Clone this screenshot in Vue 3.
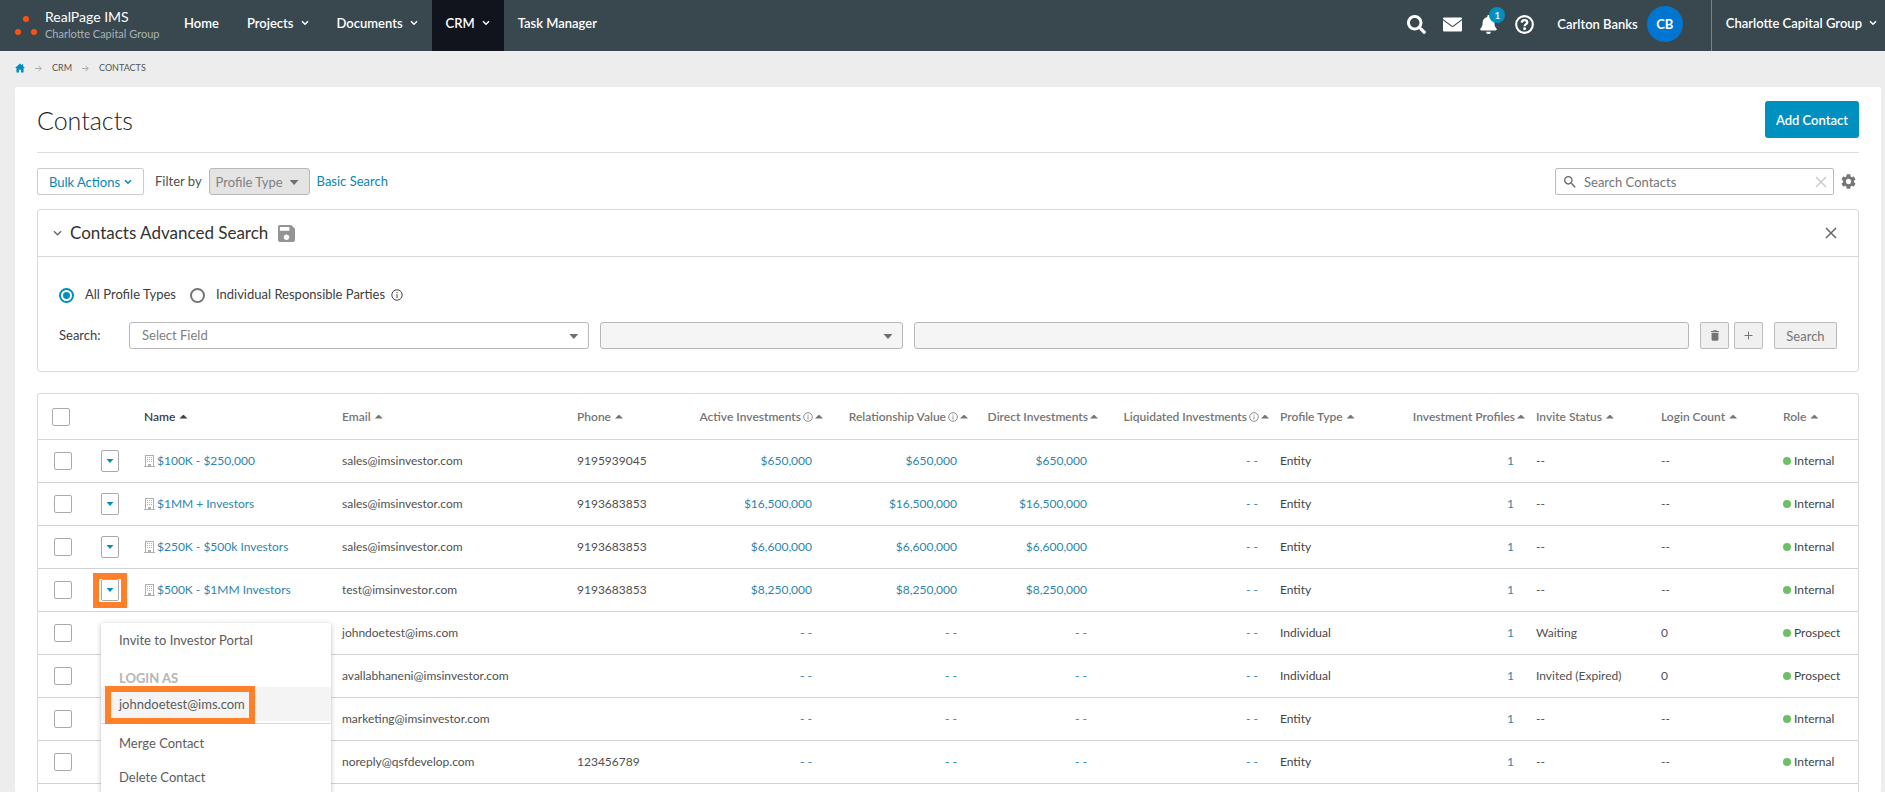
<script setup>
import { ref } from 'vue'

const nav = [
  { label: 'Home' },
  { label: 'Projects', menu: true },
  { label: 'Documents', menu: true },
  { label: 'CRM', menu: true, active: true },
  { label: 'Task Manager' },
]

const columns = [
  { label: 'Name', active: true },
  { label: 'Email' },
  { label: 'Phone' },
  { label: 'Active Investments', num: true, info: true },
  { label: 'Relationship Value', num: true, info: true },
  { label: 'Direct Investments', num: true },
  { label: 'Liquidated Investments', num: true, info: true },
  { label: 'Profile Type' },
  { label: 'Investment Profiles', num: true },
  { label: 'Invite Status' },
  { label: 'Login Count' },
  { label: 'Role' },
]

const none = '- -'
const rows = [
  { name: '$100K - $250,000', email: 'sales@imsinvestor.com', phone: '9195939045', amount: '$650,000', type: 'Entity', status: '--', logins: '--', role: 'Internal' },
  { name: '$1MM + Investors', email: 'sales@imsinvestor.com', phone: '9193683853', amount: '$16,500,000', type: 'Entity', status: '--', logins: '--', role: 'Internal' },
  { name: '$250K - $500k Investors', email: 'sales@imsinvestor.com', phone: '9193683853', amount: '$6,600,000', type: 'Entity', status: '--', logins: '--', role: 'Internal' },
  { name: '$500K - $1MM Investors', email: 'test@imsinvestor.com', phone: '9193683853', amount: '$8,250,000', type: 'Entity', status: '--', logins: '--', role: 'Internal', open: true },
  { email: 'johndoetest@ims.com', phone: '', amount: none, type: 'Individual', status: 'Waiting', logins: '0', role: 'Prospect' },
  { email: 'avallabhaneni@imsinvestor.com', phone: '', amount: none, type: 'Individual', status: 'Invited (Expired)', logins: '0', role: 'Prospect' },
  { email: 'marketing@imsinvestor.com', phone: '', amount: none, type: 'Entity', status: '--', logins: '--', role: 'Internal' },
  { email: 'noreply@qsfdevelop.com', phone: '123456789', amount: none, type: 'Entity', status: '--', logins: '--', role: 'Internal' },
]

const scope = ref('all')
</script>

<template>
  <div class="page">
    <header class="topbar">
      <div class="brand">
        <svg class="logo" viewBox="0 0 24 20" aria-hidden="true">
          <circle cx="11" cy="4" r="3" /><circle cx="3" cy="17" r="3" /><circle cx="19" cy="17" r="3" />
        </svg>
        <div>
          <div class="brand-name">RealPage IMS</div>
          <div class="brand-sub">Charlotte Capital Group</div>
        </div>
      </div>
      <nav class="nav">
        <a v-for="item in nav" :key="item.label" href="#" :class="{ active: item.active }">
          {{ item.label }}
          <svg v-if="item.menu" class="chev" viewBox="0 0 8 6"><path d="M1 1.2l3 3 3-3" /></svg>
        </a>
      </nav>
      <div class="tools">
        <button type="button" aria-label="Search">
          <svg viewBox="0 0 512 512"><path d="M505 442.700L405.300 343c-4.500-4.500-10.600-7-17-7H372c27.600-35.300 44-79.700 44-128C416 93.100 322.900 0 208 0S0 93.100 0 208s93.100 208 208 208c48.300 0 92.700-16.400 128-44v16.300c0 6.400 2.500 12.500 7 17l99.700 99.700c9.400 9.400 24.600 9.400 33.900 0l28.300-28.300c9.400-9.400 9.400-24.600.1-34zM208 336c-70.700 0-128-57.200-128-128 0-70.700 57.200-128 128-128 70.700 0 128 57.200 128 128 0 70.700-57.200 128-128 128z" /></svg>
        </button>
        <button type="button" aria-label="Messages">
          <svg viewBox="0 0 19 19"><path d="M1 2.500h17a1 1 0 0 1 1 1v.6l-9 6.600q-.5.300-1 0L0 4.100v-.6a1 1 0 0 1 1-1zM0 5.300l8.200 6.100q1.300.8 2.600 0L19 5.300v10.200a1 1 0 0 1-1 1H1a1 1 0 0 1-1-1z" /></svg>
        </button>
        <button type="button" class="bell" aria-label="Notifications">
          <svg viewBox="0 0 448 512"><path d="M224 512c35.320 0 63.970-28.650 63.970-64H160.030c0 35.350 28.650 64 63.970 64zm215.390-149.710c-19.320-20.760-55.470-51.990-55.470-154.290 0-77.700-54.480-139.900-127.940-155.160V32c0-17.670-14.320-32-31.980-32s-31.980 14.330-31.980 32v20.840C118.560 68.100 64.080 130.300 64.080 208c0 102.300-36.150 133.530-55.470 154.290-6 6.450-8.660 14.160-8.610 21.710.11 16.400 12.980 32 32.100 32h383.800c19.120 0 32-15.600 32.100-32 .05-7.550-2.610-15.270-8.610-21.710z" /></svg>
          <span class="badge">1</span>
        </button>
        <button type="button" aria-label="Help">
          <svg viewBox="0 0 18 18"><g fill="none" stroke="currentColor" stroke-width="2"><circle cx="9" cy="9" r="7.900" /><path d="M6.400 7.200C6.500 5.600 7.600 4.800 9 4.800c1.500 0 2.600.8 2.600 2.200C11.600 8.700 9.100 8.700 9.100 10.700" stroke-width="2.200" /></g><circle cx="9.100" cy="13" r="1.400" /></svg>
        </button>
      </div>
      <a href="#" class="user">Carlton Banks <span class="avatar">CB</span></a>
      <button type="button" class="company">
        Charlotte Capital Group
        <svg class="chev" viewBox="0 0 8 6"><path d="M1 1.200l3 3 3-3" /></svg>
      </button>
    </header>

    <nav class="crumbs" aria-label="Breadcrumb">
      <a href="#" class="home" aria-label="Home"><svg viewBox="0 0 12 11"><path d="M6 0L0 5.600h1.700V11H4.800V7.500h2.400V11h3.100V5.600H12L9.800 3.500V1H8.300v1.200z" /></svg></a>
      <svg class="arrow" viewBox="0 0 7 7"><path d="M0 3.500h6M3.500.8l2.700 2.700-2.700 2.700" /></svg>
      <a href="#">CRM</a>
      <svg class="arrow" viewBox="0 0 7 7"><path d="M0 3.500h6M3.500.8l2.700 2.700-2.700 2.700" /></svg>
      <span>CONTACTS</span>
    </nav>

    <main class="card">
      <div class="title-row">
        <h1>Contacts</h1>
        <button type="button" class="add">Add Contact</button>
      </div>

      <div class="toolbar">
        <button type="button" class="bulk">Bulk Actions <svg class="chev" viewBox="0 0 8 6"><path d="M1 1.200l3 3 3-3" /></svg></button>
        <label for="profile-filter" class="filter-label">Filter by</label>
        <div class="select filter">
          <select id="profile-filter"><option>Profile Type</option></select>
        </div>
        <a href="#" class="basic">Basic Search</a>
        <div class="search-box">
          <svg class="mag" viewBox="3 3 18 18"><path d="M15.500 14h-.79l-.28-.27C15.410 12.590 16 11.110 16 9.500 16 5.910 13.090 3 9.500 3S3 5.910 3 9.500 5.910 16 9.500 16c1.610 0 3.090-.59 4.230-1.570l.27.28v.79l5 4.990L20.490 19l-4.990-5zm-6 0C7.010 14 5 11.990 5 9.500S7.010 5 9.500 5 14 7.010 14 9.500 11.990 14 9.500 14z" /></svg>
          <input type="text" placeholder="Search Contacts" aria-label="Search Contacts" />
          <button type="button" aria-label="Clear"><svg class="cross" viewBox="0 0 12 12"><path d="M1 1l10 10M11 1L1 11" /></svg></button>
        </div>
        <button type="button" class="gear" aria-label="Settings">
          <svg viewBox="2 2 20 20"><path d="M19.140 12.940c.04-.3.06-.61.06-.94 0-.32-.02-.64-.07-.94l2.030-1.580c.18-.14.23-.41.12-.61l-1.920-3.320c-.12-.22-.37-.29-.59-.22l-2.390.96c-.5-.38-1.030-.7-1.620-.94l-.36-2.540c-.04-.24-.24-.41-.48-.41h-3.840c-.24 0-.43.17-.47.41l-.36 2.540c-.59.24-1.130.57-1.620.94l-2.390-.96c-.22-.08-.47 0-.59.22L2.740 8.870c-.12.21-.08.47.12.61l2.030 1.580c-.05.3-.09.63-.09.94s.02.64.07.94l-2.030 1.580c-.18.14-.23.41-.12.61l1.920 3.320c.12.22.37.29.59.22l2.390-.96c.5.38 1.030.7 1.620.94l.36 2.540c.05.24.24.41.48.41h3.840c.24 0 .44-.17.47-.41l.36-2.540c.59-.24 1.130-.56 1.620-.94l2.390.96c.22.08.47 0 .59-.22l1.920-3.320c.12-.22.07-.47-.12-.61l-2.010-1.580zM12 15.600c-1.980 0-3.600-1.620-3.600-3.600s1.620-3.600 3.600-3.600 3.600 1.620 3.600 3.600-1.620 3.600-3.600 3.600z" /></svg>
        </button>
      </div>

      <section class="panel">
        <div class="panel-head">
          <svg class="fold" viewBox="0 0 10 7"><path d="M1 1l4 4 4-4" /></svg>
          <h2>Contacts Advanced Search</h2>
          <button type="button" aria-label="Save search">
            <svg class="save" viewBox="3 3 18 18"><path d="M17 3H5c-1.110 0-2 .9-2 2v14c0 1.100.89 2 2 2h14c1.100 0 2-.9 2-2V7l-4-4zm-5 16c-1.660 0-3-1.340-3-3s1.340-3 3-3 3 1.340 3 3-1.340 3-3 3zm3-10H5V5h10v4z" /></svg>
          </button>
          <button type="button" class="close" aria-label="Close"><svg class="cross" viewBox="0 0 12 12"><path d="M1 1l10 10M11 1L1 11" /></svg></button>
        </div>
        <div class="panel-body">
          <div class="radios">
            <input id="scope-all" v-model="scope" type="radio" name="scope" value="all" />
            <label for="scope-all">All Profile Types</label>
            <input id="scope-ind" v-model="scope" type="radio" name="scope" value="individual" />
            <label for="scope-ind">Individual Responsible Parties</label>
            <svg class="info dark" viewBox="0 0 12 12"><circle cx="6" cy="6" r="5.200" /><path d="M6 5.200V9M6 3v1.200" /></svg>
          </div>
          <div class="criteria">
            <label for="field">Search:</label>
            <div class="select">
              <select id="field"><option>Select Field</option></select>
            </div>
            <div class="select">
              <select aria-label="Operator" disabled><option></option></select>
            </div>
            <input type="text" class="value" aria-label="Value" disabled />
            <div class="pair">
              <button type="button" class="grey" aria-label="Remove"><svg class="trash" viewBox="5 3 14 18"><path d="M6 19c0 1.100.9 2 2 2h8c1.100 0 2-.9 2-2V7H6v12zM19 4h-3.500l-1-1h-5l-1 1H5v2h14V4z" /></svg></button>
              <button type="button" class="grey" aria-label="Add"><svg class="plus" viewBox="0 0 9 9"><path d="M4.500 0.500v8M0.500 4.500h8" /></svg></button>
            </div>
            <button type="button" class="grey go">Search</button>
          </div>
        </div>
      </section>

      <div class="grid">
        <table>
          <colgroup>
            <col class="w-check" /><col class="w-action" /><col class="w-name" /><col class="w-email" />
            <col class="w-phone" /><col class="w-active" /><col class="w-relation" /><col class="w-direct" />
            <col class="w-liquid" /><col class="w-type" /><col class="w-profiles" /><col class="w-status" />
            <col class="w-logins" /><col class="w-role" />
          </colgroup>
          <thead>
            <tr>
              <th class="check"><input type="checkbox" aria-label="Select all contacts" /></th>
              <th></th>
              <th v-for="c in columns" :key="c.label" :class="{ num: c.num, sorted: c.active }">
                <span class="th">
                  {{ c.label }}
                  <svg v-if="c.info" class="info" viewBox="0 0 12 12"><circle cx="6" cy="6" r="5.200" /><path d="M6 5.200V9M6 3v1.200" /></svg>
                  <i class="sort"></i>
                </span>
              </th>
            </tr>
          </thead>
          <tbody>
            <tr v-for="(r, i) in rows" :key="i">
              <td class="check"><input type="checkbox" :aria-label="'Select ' + r.email" /></td>
              <td class="action">
                <div v-if="r.name" class="anchor">
                  <button type="button" class="drop" aria-label="Contact actions"><i></i></button>
                  <template v-if="r.open">
                    <span class="ring"></span>
                    <div class="menu">
                      <a href="#">Invite to Investor Portal</a>
                      <div class="menu-title">LOGIN AS</div>
                      <a href="#" class="hover">johndoetest@ims.com<span class="ring wide"></span></a>
                      <hr />
                      <a href="#">Merge Contact</a>
                      <a href="#">Delete Contact</a>
                    </div>
                  </template>
                </div>
              </td>
              <td>
                <a v-if="r.name" href="#" class="name">
                  <svg class="building" viewBox="0 0 11 12"><path d="M1 0h9v11h1v1H0v-1h1z" /><path class="wall" d="M2 1h7v10H7V9H4v2H2z" /><path d="M3 2h1v1H3zM5 2h1v1H5zM7 2h1v1H7zM3 4h1v1H3zM5 4h1v1H5zM7 4h1v1H7zM3 6h1v1H3zM5 6h1v1H5zM7 6h1v1H7z" /></svg>{{ r.name }}</a>
              </td>
              <td>{{ r.email }}</td>
              <td>{{ r.phone }}</td>
              <td class="num"><a href="#">{{ r.amount }}</a></td>
              <td class="num"><a href="#">{{ r.amount }}</a></td>
              <td class="num"><a href="#">{{ r.amount }}</a></td>
              <td class="num"><a href="#">{{ none }}</a></td>
              <td class="strong">{{ r.type }}</td>
              <td class="num"><a href="#">1</a></td>
              <td>{{ r.status }}</td>
              <td>{{ r.logins }}</td>
              <td class="strong"><span class="dot"></span>{{ r.role }}</td>
            </tr>
          </tbody>
        </table>
      </div>
    </main>
  </div>
</template>

<style>
body {
  margin: 0;
  background: #ededed;
}
</style>

<style scoped>
* {
  box-sizing: border-box;
}
.page {
  display: flex;
  flex-direction: column;
  height: 100vh;
  overflow: hidden;
  background: #ededed;
  color: #505050;
  font-family: Lato, "Open Sans", sans-serif;
  font-size: 13px;
  line-height: 18px;
}
button,
input,
select {
  font: inherit;
  color: inherit;
  margin: 0;
}
button {
  padding: 0;
  border: 0;
  background: none;
  display: inline-flex;
  align-items: center;
  justify-content: center;
}
a {
  color: #2d86ab;
  text-decoration: none;
}
svg {
  display: block;
  flex: none;
  fill: currentColor;
}
.chev {
  width: 8px;
  height: 6px;
  fill: none;
  stroke: currentColor;
  stroke-width: 1.5;
}

/* Top bar */
.topbar {
  display: flex;
  align-items: center;
  flex: none;
  height: 51px;
  background: #39474f;
  color: #fff;
  font-weight: 600;
}
.brand {
  display: flex;
  align-items: center;
  gap: 6px;
  width: 170px;
  padding: 0 0 2px 15px;
  font-weight: 400;
}
.logo {
  width: 24px;
  height: 20px;
  fill: #fc5112;
}
.brand-name {
  font-size: 14px;
}
.brand-sub {
  font-size: 11px;
  line-height: 16px;
  white-space: nowrap;
  color: #aab2b7;
}
.nav {
  display: flex;
  align-self: stretch;
}
.nav a {
  display: flex;
  align-items: center;
  gap: 7px;
  padding: 0 14px 5px;
  color: #fff;
}
.nav a.active {
  background: #11141c;
}
.tools {
  display: flex;
  gap: 17px;
  margin-left: auto;
  padding-bottom: 3px;
}
.tools svg {
  width: 19px;
  height: 19px;
}
.bell {
  position: relative;
}
.badge {
  position: absolute;
  left: 10px;
  top: -8px;
  width: 16px;
  height: 16px;
  border-radius: 8px;
  background: #0090bf;
  font-size: 10px;
  line-height: 16px;
}
.user {
  display: flex;
  align-items: center;
  gap: 9px;
  margin: 0 28px 0 23px;
  padding-bottom: 3px;
  color: #fff;
}
.avatar {
  width: 36px;
  height: 36px;
  border-radius: 50%;
  background: #0076d1;
  line-height: 36px;
  text-align: center;
  font-weight: 700;
}
.company {
  align-self: stretch;
  gap: 7px;
  padding: 0 8px 6px 14px;
  border-left: 1px solid #77838a;
}

/* Breadcrumb */
.crumbs {
  display: flex;
  align-items: center;
  gap: 10px;
  flex: none;
  height: 36px;
  padding: 0 0 2px 15px;
  font-size: 9px;
  color: #555;
}
.crumbs a {
  color: #555;
}
.crumbs .home {
  color: #0090bf;
}
.home svg {
  width: 10px;
  height: 10px;
}
.arrow {
  width: 7px;
  height: 7px;
  fill: none;
  stroke: #aaa;
}

/* Card */
.card {
  flex: 1;
  display: flex;
  flex-direction: column;
  min-height: 0;
  margin: 0 4px 0 15px;
  padding: 0 22px;
  border-radius: 2px;
  background: #fff;
}
.title-row {
  display: flex;
  align-items: center;
  justify-content: space-between;
  flex: none;
  height: 66px;
  border-bottom: 1px solid #dcdcdc;
}
h1 {
  margin: 0;
  font-size: 25px;
  line-height: 32px;
  font-weight: 300;
  color: #222;
}
.add {
  height: 37px;
  padding: 0 11px;
  border-radius: 3px;
  background: #0090bf;
  color: #fff;
  font-weight: 600;
}
.toolbar {
  display: flex;
  align-items: center;
  flex: none;
  margin-top: 15px;
  height: 27px;
}
.bulk {
  width: 107px;
  height: 27px;
  gap: 4px;
  border: 1px solid #ccc;
  border-radius: 2px;
  color: #0a86b3;
}
.filter-label {
  margin: 0 7px 2px 11px;
}
.select {
  position: relative;
  min-width: 0;
}
.select::after {
  content: "";
  position: absolute;
  right: 11px;
  top: 12px;
  width: 9px;
  height: 5px;
  background: #707070;
  clip-path: polygon(0 0, 100% 0, 50% 100%);
  pointer-events: none;
}
select,
.value {
  appearance: none;
  display: block;
  width: 100%;
  height: 27px;
  padding: 0 12px 1px;
  border: 1px solid #b8b8b8;
  border-radius: 3px;
  background: #fff;
  color: #808080;
}
.filter {
  width: 101px;
}
.filter select {
  padding: 0 6px;
  background: #e4e4e4;
}
.basic {
  margin: 0 0 2px 7px;
  color: #0a86b3;
}
.search-box {
  display: flex;
  align-items: center;
  width: 279px;
  height: 27px;
  margin-left: auto;
  padding: 0 6px 0 8px;
  border: 1px solid #bbb;
  border-radius: 2px;
  color: #666;
}
.search-box input {
  flex: 1;
  min-width: 0;
  padding: 0 0 0 8px;
  border: 0;
  outline: 0;
  background: none;
}
.search-box input::placeholder {
  color: #757575;
}
.mag {
  width: 12px;
  height: 12px;
}
.cross {
  width: 12px;
  height: 12px;
  fill: none;
  stroke: currentColor;
  stroke-width: 1.5;
}
.search-box .cross {
  color: #ccc;
}
.gear {
  margin: 0 3px 0 7px;
  color: #757575;
}
.gear svg {
  width: 15px;
  height: 15px;
}

/* Advanced search */
.panel {
  flex: none;
  margin-top: 14px;
  border: 1px solid #dadada;
  border-radius: 3px;
}
.panel-head {
  display: flex;
  align-items: center;
  height: 47px;
  padding: 0 21px 0 15px;
  border-bottom: 1px solid #dadada;
  color: #666;
}
.fold {
  width: 9px;
  height: 7px;
  fill: none;
  stroke: currentColor;
  stroke-width: 1.5;
}
h2 {
  margin: 0 10px 0 8px;
  font-size: 17px;
  line-height: 20px;
  font-weight: 400;
  color: #333;
}
.save {
  width: 17px;
  height: 17px;
  color: #949494;
}
.close {
  margin-left: auto;
}
.panel-body {
  padding: 28px 21px 22px;
  color: #404040;
}
.radios {
  display: flex;
  align-items: center;
  height: 20px;
}
input[type="radio"] {
  appearance: none;
  width: 15px;
  height: 15px;
  border: 2px solid #757575;
  border-radius: 50%;
}
input[type="radio"]:checked {
  border-color: #0090bf;
  background: radial-gradient(circle, #0090bf 3px, #fff 4px);
}
.radios label {
  margin: 0 14px 2px 11px;
}
.radios label:last-of-type {
  margin-right: 6px;
}
.info {
  width: 10px;
  height: 10px;
  fill: none;
  stroke: #777;
}
.info.dark {
  width: 12px;
  height: 12px;
  stroke: #444;
}
.criteria {
  display: grid;
  grid-template-columns: 59px 460fr 303fr 774fr auto auto;
  align-items: center;
  gap: 11px;
  margin-top: 17px;
}
.criteria > label {
  padding-bottom: 2px;
}
.value {
  min-width: 0;
}
.value,
select:disabled {
  background: #f5f5f5;
  opacity: 1;
}
.pair {
  display: flex;
  gap: 5px;
}
.grey {
  width: 29px;
  height: 27px;
  border: 1px solid #bbb;
  border-radius: 2px;
  background: #f0f0f0;
  color: #757575;
}
.go {
  width: 63px;
}
.trash {
  width: 8px;
  height: 11px;
}
.plus {
  width: 9px;
  height: 9px;
  stroke: currentColor;
}

/* Contacts table */
.grid {
  flex: 1 0 auto;
  margin-top: 21px;
  border: 1px solid #dadada;
  border-bottom: 0;
  border-radius: 3px 3px 0 0;
}
table {
  width: 100%;
  table-layout: fixed;
  border-collapse: separate;
  border-spacing: 0;
  font-size: 12px;
}
.w-check { width: 63px; }
.w-action { width: 43px; }
.w-name { width: 198px; }
.w-email { width: 235px; }
.w-phone { width: 113px; }
.w-active { width: 144px; }
.w-relation { width: 145px; }
.w-direct { width: 130px; }
.w-liquid { width: 171px; }
.w-type { width: 126px; }
.w-profiles { width: 130px; }
.w-status { width: 125px; }
.w-logins { width: 122px; }
.w-role { width: 75px; }
th,
td {
  height: 43px;
  padding: 0;
  border-bottom: 1px solid #d2d2d2;
  text-align: left;
  white-space: nowrap;
  vertical-align: middle;
}
th {
  height: 46px;
  border-bottom-color: #ccd9e2;
  font-weight: 600;
  color: #757575;
}
.sorted {
  color: #404040;
}
.th {
  display: inline-flex;
  align-items: center;
  gap: 4px;
}
.num {
  text-align: right;
  padding-right: 22px;
}
th.num {
  padding-right: 11px;
}
.num .th {
  gap: 2px;
}
.sort {
  width: 8px;
  height: 4px;
  background: currentColor;
  clip-path: polygon(50% 0, 100% 100%, 0 100%);
}
.check {
  padding-left: 16px;
}
th.check {
  padding-left: 14px;
}
input[type="checkbox"] {
  appearance: none;
  display: block;
  width: 18px;
  height: 18px;
  border: 1px solid #aaa;
  border-radius: 2px;
  background: #fff;
}
.strong {
  color: #444;
}
.anchor {
  position: relative;
  width: 18px;
}
.drop {
  width: 18px;
  height: 22px;
  border: 1px solid #aaa;
  border-radius: 2px;
  background: #fff;
  display: flex;
}
.drop i {
  width: 7px;
  height: 4px;
  background: #0090bf;
  clip-path: polygon(0 0, 100% 0, 50% 100%);
}
.ring {
  position: absolute;
  left: -8px;
  top: -6px;
  width: 34px;
  height: 35px;
  border: 6px solid #ff8026;
}
.ring.wide {
  left: 4px;
  top: -1px;
  width: 150px;
  height: 38px;
}
.menu {
  position: absolute;
  left: 0;
  top: 44px;
  z-index: 2;
  width: 230px;
  padding-bottom: 8px;
  border-radius: 2px;
  background: #fff;
  box-shadow: 0 1px 5px rgba(0, 0, 0, 0.25);
  font-size: 13px;
}
.menu a {
  display: block;
  position: relative;
  padding: 0 18px;
  line-height: 34px;
  color: #5c5c5c;
}
.menu .hover {
  background: #f4f4f4;
}
.menu-title {
  padding: 12px 18px 0;
  line-height: 18px;
  font-weight: 700;
  color: #b5b5b5;
}
.menu hr {
  margin: 2px 0;
  border: 0;
  border-top: 1px solid #d8d8d8;
}
.name {
  display: flex;
  align-items: center;
  gap: 2px;
}
.building {
  width: 11px;
  height: 12px;
  fill: #b0b0b0;
}
.wall {
  fill: #fff;
}
.dot {
  display: inline-block;
  width: 8px;
  height: 8px;
  margin-right: 3px;
  border-radius: 50%;
  background: #6dbf67;
}
</style>
